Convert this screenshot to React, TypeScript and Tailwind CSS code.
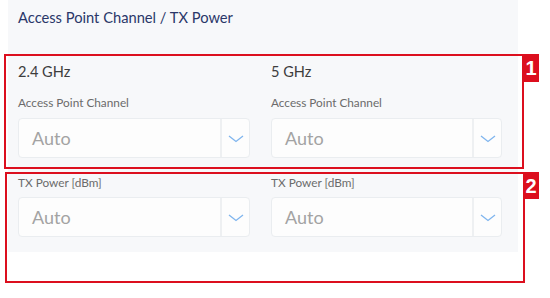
import React from "react";

const font = { fontFamily: 'Lato, "Open Sans", sans-serif' };

function Chevron() {
  return (
    <svg width="16" height="8" viewBox="0 0 16 8" fill="none">
      <polyline points="1,1 8,6.5 15,1" stroke="#7fb5ee" strokeWidth="1.3" fill="none" />
    </svg>
  );
}

function Select() {
  return (
    <div className="flex h-[40px] w-full rounded-[4px] border border-[#eaedf0] bg-[#fdfdfd]">
      <div className="flex flex-1 items-center pl-[13px] text-[18px] text-[#a3a3a3]">Auto</div>
      <div className="w-[2px] bg-[#eef0f2]" />
      <div className="flex w-[27px] items-center justify-center pt-[2px]">
        <Chevron />
      </div>
    </div>
  );
}

function Column({ band }: { band: string }) {
  return (
    <div>
      <div className="mt-[28px] h-[20px] text-[14.6px] leading-[20px] text-[#3d3d3d]">{band}</div>
      <div className="mt-[13px] h-[16px] text-[11.8px] leading-[16px] text-[#6b6b6b]">Access Point Channel</div>
      <div className="mt-[7px]"><Select /></div>
      <div className="mt-[17px] h-[16px] text-[11.8px] leading-[16px] text-[#6b6b6b]">TX Power [dBm]</div>
      <div className="mt-[6px]"><Select /></div>
    </div>
  );
}

export default function App() {
  return (
    <div className="relative h-[298px] w-[550px] bg-white" style={font}>
      <div className="ml-[8px] h-[252px] w-[510px] bg-[#f7f8fa] pl-[10px] pr-[16px]">
        <div className="h-[34px] text-[14.7px] leading-[34px] text-[#2a3769]">
          Access Point Channel / TX Power
        </div>
        <div className="grid grid-cols-[232px_231px] gap-x-[21px]">
          <Column band="2.4 GHz" />
          <Column band="5 GHz" />
        </div>
      </div>

      <div className="absolute left-[4px] top-[54px] h-[115px] w-[520px] border-2 border-[#dc0f1e]" />
      <div className="absolute left-[523px] top-[54px] flex h-[28px] w-[16px] items-center justify-center bg-[#dc0f1e] text-[20px] font-bold text-white" style={{ fontFamily: '"Liberation Sans", sans-serif' }}>1</div>

      <div className="absolute left-[5px] top-[172px] h-[111px] w-[520px] border-2 border-[#dc0f1e]" />
      <div className="absolute left-[523px] top-[172px] flex h-[27px] w-[16px] items-center justify-center bg-[#dc0f1e] text-[20px] font-bold text-white" style={{ fontFamily: '"Liberation Sans", sans-serif' }}>2</div>
    </div>
  );
}
